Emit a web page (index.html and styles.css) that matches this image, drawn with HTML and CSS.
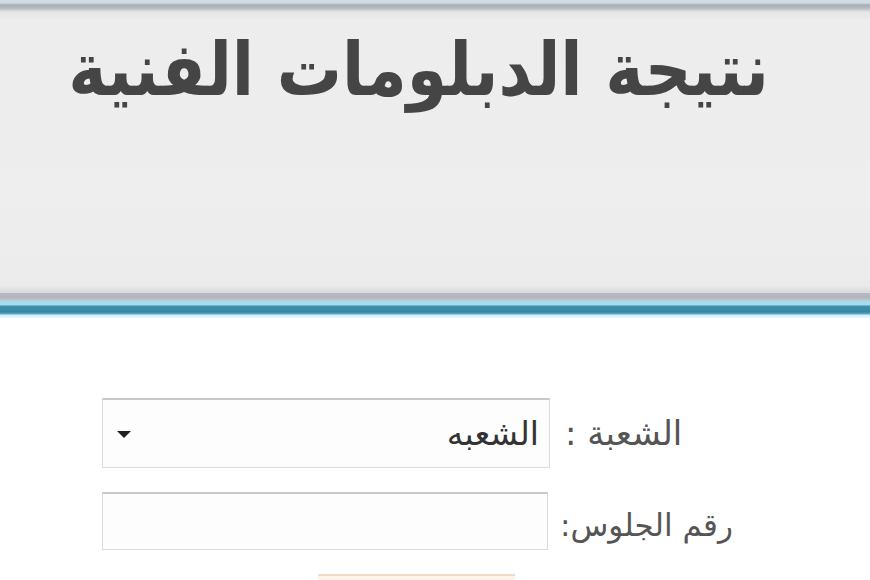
FILE: index.html
```html
<!DOCTYPE html>
<html lang="ar">
<head>
<meta charset="utf-8">
<title>نتيجة الدبلومات الفنية</title>
<link rel="stylesheet" href="styles.css">
</head>
<body>
<header class="banner">
  <h1 class="title">نتيجة الدبلومات الفنية</h1>
</header>
<div class="stripe"></div>
<main class="form">
  <div class="row">
    <div class="select">
      <span class="arrow"></span>
      <span class="select-text">الشعبه</span>
    </div>
    <label class="label label-1">الشعبة :</label>
  </div>
  <div class="row row-2">
    <div class="input"></div>
    <label class="label label-2">رقم الجلوس:</label>
  </div>
  <div class="btn-row">
    <button class="btn" type="button"></button>
  </div>
</main>
</body>
</html>
```

FILE: styles.css
```css
html, body {
  margin: 0;
  padding: 0;
  background: #ffffff;
  overflow: hidden;
}
body {
  width: 870px;
  height: 580px;
  font-family: "DejaVu Sans", "Noto Sans", sans-serif;
}
.banner {
  height: 293px;
  box-sizing: border-box;
  background: linear-gradient(to bottom,
    #d3dde4 0px, #cfd9e0 3px, #a7afb7 5px, #b3b9bf 8px, #e4e5e6 12px,
    #ededed 20px, #eeeeee 200px, #ebebeb 285px, #d9d9dc 293px);
  direction: rtl;
  padding-top: 23px;
  padding-right: 101px;
}
.title {
  margin: 0;
  font-size: 65px;
  font-weight: bold;
  color: #454545;
  line-height: 100px;
  text-align: right;
  transform: scaleY(1.14);
  transform-origin: 50% 75%;
}
.stripe {
  height: 25px;
  background: linear-gradient(to bottom,
    #b9bbc2 0px, #b0b3ba 4px, #bcc6cc 7px, #a6deee 9px, #a4dcec 12px,
    #3e8eae 13px, #3a85a4 19px, #6aa8c0 21px, #c6f2fa 22px, #e8fcff 25px);
}
.form {
  padding-top: 80px;
  padding-left: 102px;
  display: flex;
  flex-direction: column;
}
.row {
  display: flex;
  align-items: center;
}
.select {
  width: 448px;
  height: 70px;
  box-sizing: border-box;
  border: 1px solid #dcdcdc;
  border-top: 2px solid #c8c8c8;
  background: #fdfdfd;
  display: flex;
  align-items: center;
  justify-content: space-between;
  padding: 0 10px 0 14px;
}
.arrow {
  width: 0;
  height: 0;
  border-left: 7px solid transparent;
  border-right: 7px solid transparent;
  border-top: 7px solid #222;
  margin-top: 2px;
}
.select-text {
  font-size: 33px;
  color: #333333;
  direction: rtl;
}
.label {
  font-size: 31px;
  color: #555555;
  direction: rtl;
}
.label-1 {
  margin-left: 15px;
  font-size: 34px;
}
.row-2 {
  margin-top: 24px;
}
.input {
  width: 446px;
  height: 58px;
  box-sizing: border-box;
  border: 1px solid #dcdcdc;
  border-top: 2px solid #c8c8c8;
  background: #fdfdfd;
}
.label-2 {
  margin-left: 12px;
  padding-top: 8px;
}
.btn-row {
  padding-left: 216px;
  margin-top: 24px;
}
.btn {
  width: 197px;
  height: 40px;
  border: none;
  border-top: 2px solid #f2d9c8;
  background: #fdf3ea;
  display: block;
}
```
